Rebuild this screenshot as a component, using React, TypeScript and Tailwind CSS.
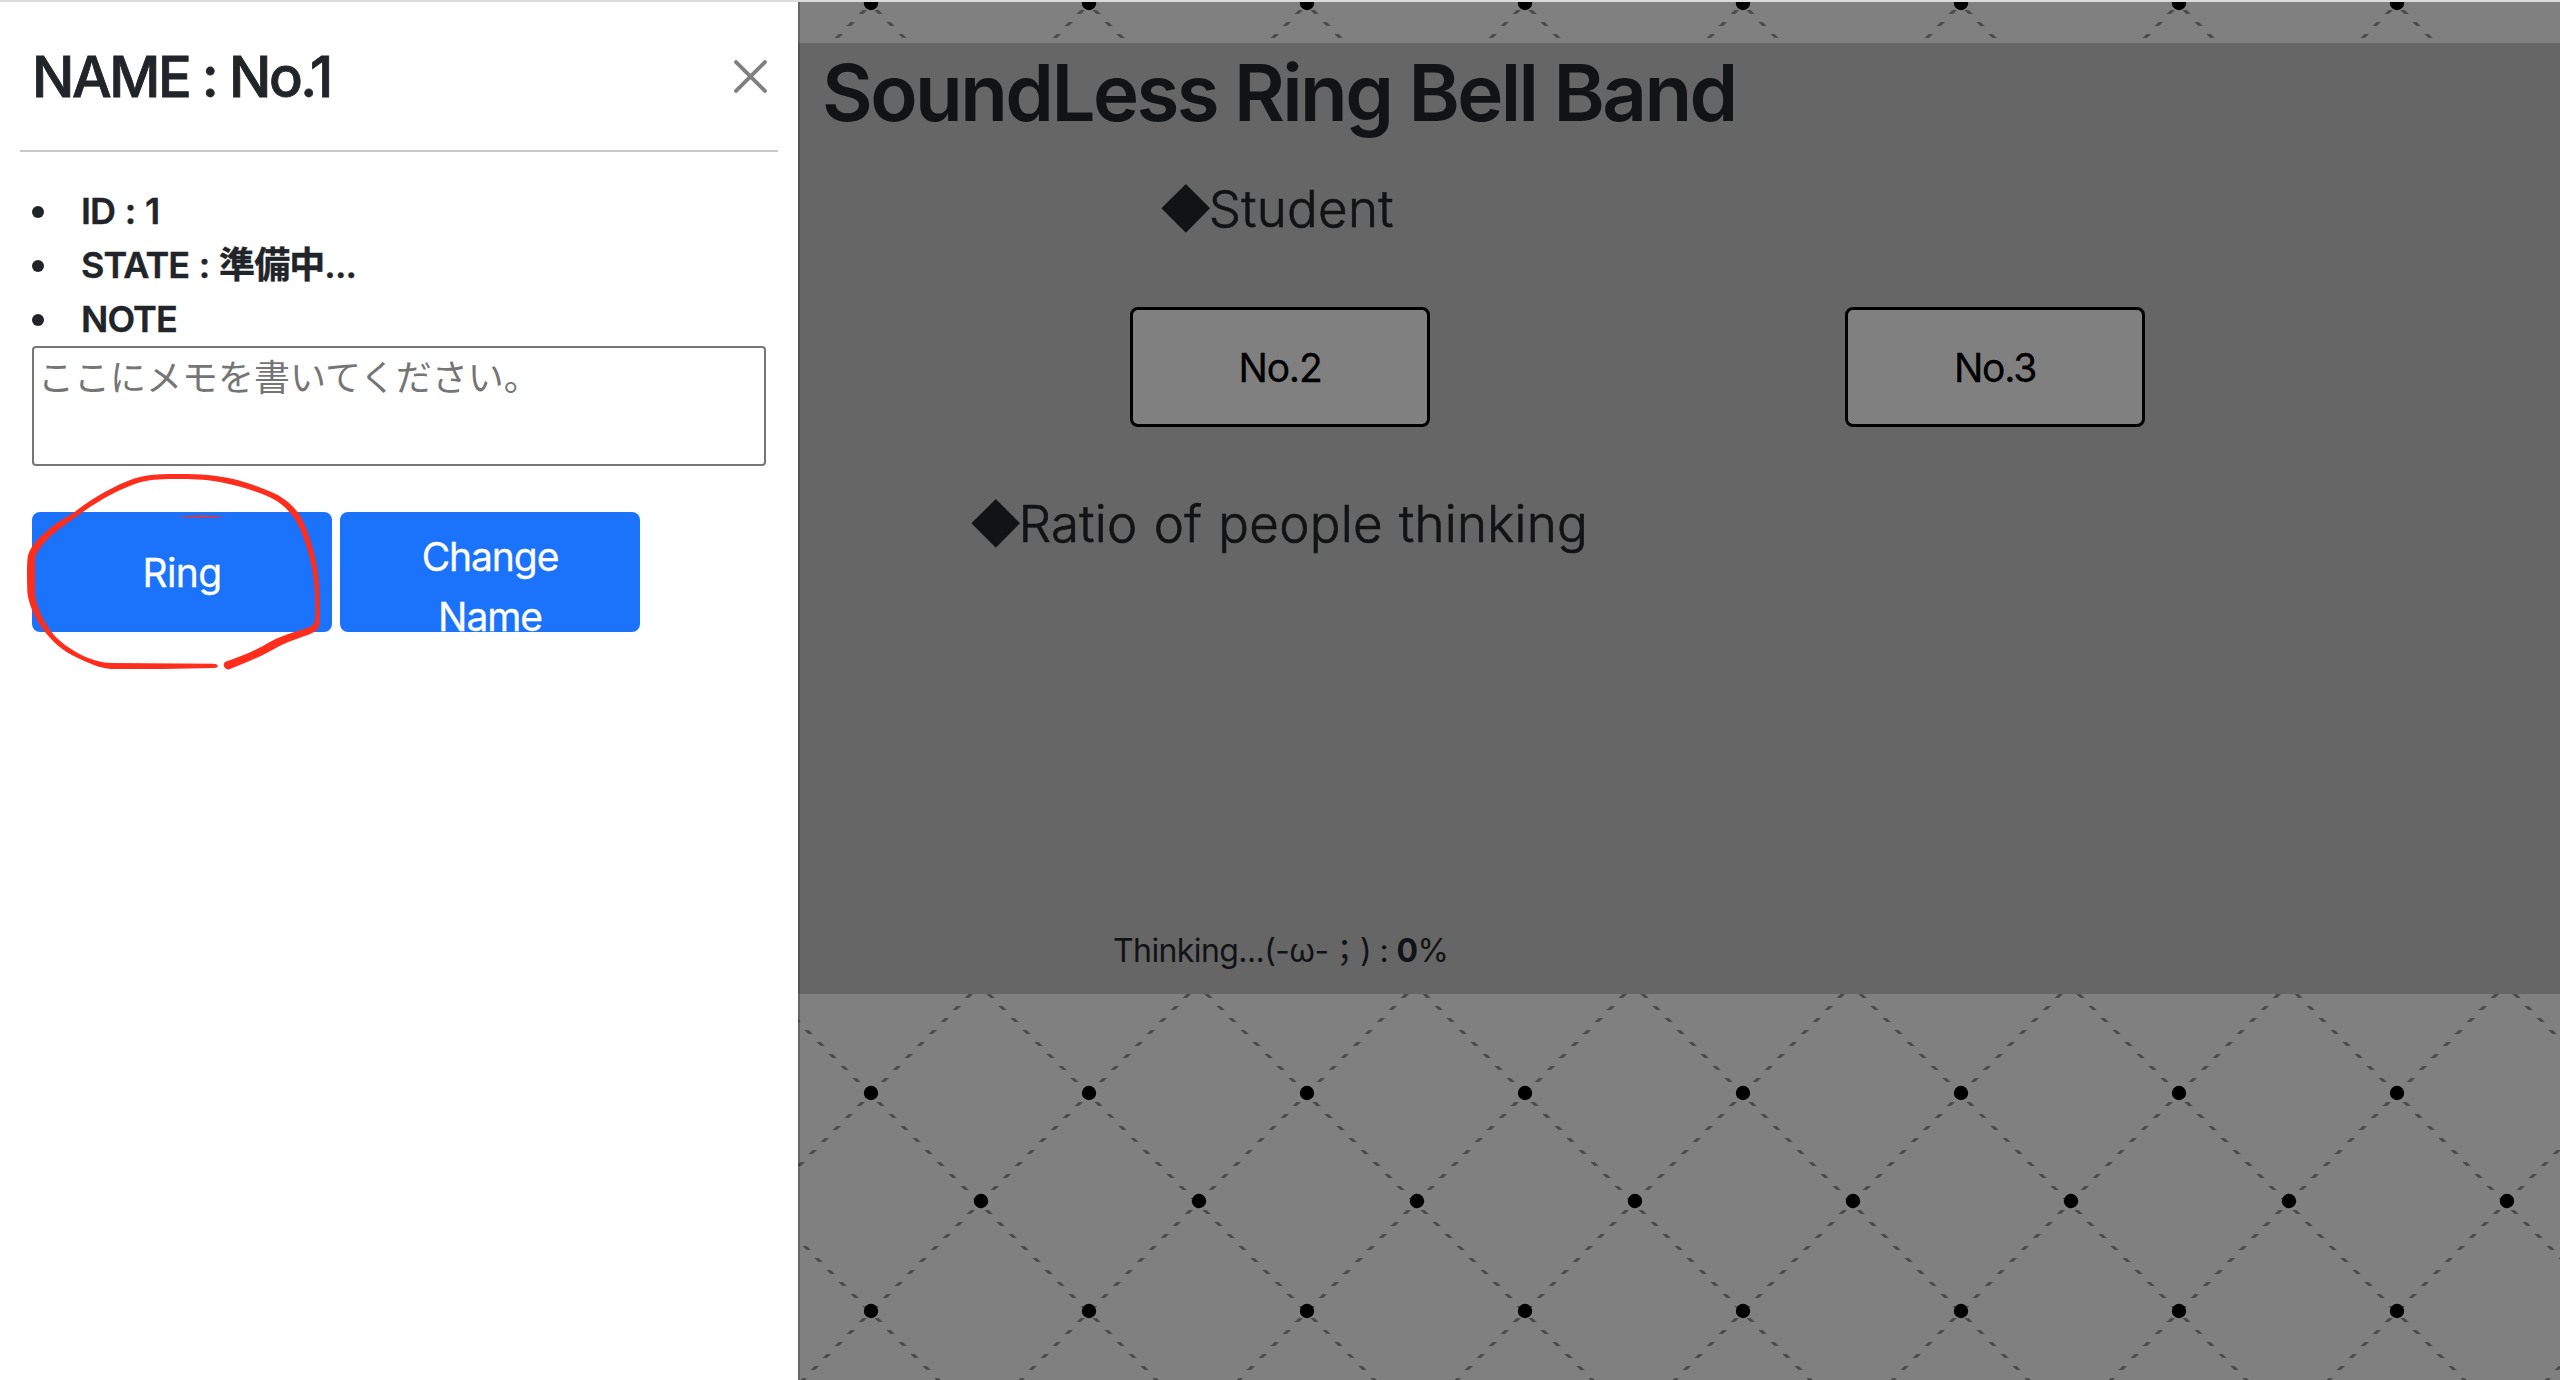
import React from "react";

const sans = "font-['Inter','Noto_Sans_CJK_JP',sans-serif]";

function Pattern() {
  return (
    <svg className="absolute inset-0 h-full w-full" aria-hidden="true">
      <defs>
        <pattern id="lines" width="218" height="218" patternUnits="userSpaceOnUse">
          <g stroke="#4c4c4c" strokeWidth="3.2">
            <path d="M-10 12.8L12.8 -10M-10 230.8L230.8 -10M200 238.8L238.8 200" />
            <path d="M-10 -4.6L230 235.4M-10 213.4L20 243.4M200 -12.6L230 17.4" />
          </g>
        </pattern>
        <pattern id="gaps" width="12" height="12" patternUnits="userSpaceOnUse">
          <rect y="2" width="12" height="8" fill="#808080" />
        </pattern>
        <pattern id="dots" x="762" y="-106" width="218" height="218" patternUnits="userSpaceOnUse">
          <circle cx="109" cy="109" r="7.2" />
          <circle cx="1" cy="-1" r="7.2" />
          <circle cx="219" cy="-1" r="7.2" />
          <circle cx="1" cy="217" r="7.2" />
          <circle cx="219" cy="217" r="7.2" />
        </pattern>
      </defs>
      <rect width="100%" height="100%" fill="#808080" />
      <rect width="100%" height="100%" fill="url(#lines)" />
      <rect width="100%" height="100%" fill="url(#gaps)" />
      <rect width="100%" height="100%" fill="url(#dots)" />
    </svg>
  );
}

function StudentButton({ name }: { name: string }) {
  return (
    <button className="h-[120px] w-[300px] rounded-[8px] border-[3px] border-black bg-[#808080] pt-[2px] text-[39px] tracking-[-1.2px] text-black [-webkit-text-stroke:0.3px_black]">
      {name}
    </button>
  );
}

function Item({ children }: { children: React.ReactNode }) {
  return (
    <li className="flex h-[54px] items-center">
      <span className="mt-[3px] mr-[37px] h-[12px] w-[12px] rounded-full bg-[#212529]" />
      <span className="mt-[2px]">{children}</span>
    </li>
  );
}

function Heading({ children }: { children: React.ReactNode }) {
  return (
    <h2 className="flex text-[51px] leading-[56px] font-light tracking-[0.3px]">
      <span className="-mr-[4px] -ml-px">◆</span>
      <span className="[word-spacing:1.5px] [-webkit-text-stroke:0.7px_#111315]">{children}</span>
    </h2>
  );
}

function RedCircle() {
  return (
    <svg
      className="pointer-events-none absolute top-[460px] left-[20px]"
      width="320"
      height="220"
      viewBox="0 0 960 660"
      fill="#ff2d1c"
      aria-hidden="true"
    >
      <path d="M165 155C220 112 285 76 345 55C385 42 435 42 480 42C540 42 590 46 640 57C690 70 740 88 775 106C815 130 840 160 852 190C872 235 888 295 894 340C899 390 900 440 899 490C896 508 886 516 872 521C845 532 805 544 780 557C725 588 680 608 628 628C612 630 606 612 616 605C665 589 710 570 755 543C795 522 840 512 870 500C882 494 886 485 886 470C888 430 884 370 877 330C868 280 850 225 832 190C815 160 795 138 765 120C725 98 660 78 610 68C570 60 530 57 480 57C430 56 390 58 355 68C290 90 225 128 175 166C130 198 95 222 70 252C55 270 45 285 45 302V405C50 440 68 480 92 512C115 545 155 570 195 590C220 600 245 608 275 609L580 611C598 612 598 624 580 624L430 627H275C235 625 205 608 175 595C125 572 95 545 65 502C40 465 24 425 22 395C21 360 20 320 23 290C32 255 60 230 90 205C115 183 140 172 165 155Z" />
      <path d="M472 170Q545 163 618 170Q545 174 472 170Z" />
    </svg>
  );
}

export default function App() {
  return (
    <div className={`${sans} relative flex h-[1380px] w-[2560px] overflow-hidden text-[#212529]`}>
      <Pattern />
      <aside className="relative w-[800px] shrink-0 border-r-2 border-black/20 bg-white bg-clip-padding pt-[2px]">
        <header className="flex h-[148px] items-center justify-between pr-[31px] pl-[32px]">
          <h5 className="pt-[2px] text-[56px] font-medium tracking-[-2.4px] [-webkit-text-stroke:0.8px_#212529]">NAME : No.1</h5>
          <svg width="33" height="33" viewBox="0 0 32 32" className="text-[#808080]">
            <path d="M2 2L30 30M30 2L2 30" stroke="currentColor" strokeWidth="3.8" strokeLinecap="round" />
          </svg>
        </header>
        <hr className="mx-5 h-[2px] border-0 bg-[#c8c8c8]" />
        <ul className="mt-[31px] mb-px ml-[32px] text-[36px] font-semibold tracking-[-0.9px] [word-spacing:1.5px] [-webkit-text-stroke:0.4px_#212529]">
          <Item>ID : 1</Item>
          <Item>STATE : 準備中...</Item>
          <Item>NOTE</Item>
        </ul>
        <textarea
          placeholder="ここにメモを書いてください。"
          className="mx-[32px] block h-[120px] w-[734px] resize-none rounded-[4px] border-2 border-[#767676] px-[4px] pt-[4px] text-[36px] leading-[53px] placeholder:text-[#757575]"
        />
        <div className="mt-[46px] ml-[32px] flex gap-2 text-[39px] text-white [-webkit-text-stroke:0.3px_white]">
          <button className="h-[120px] w-[300px] rounded-[8px] bg-[#1b73fb] pt-[3px] tracking-[-0.6px]">Ring</button>
          <button className="h-[120px] w-[300px] overflow-hidden rounded-[8px] bg-[#1b73fb] px-10 pt-[15px] leading-[60px] tracking-[-1.1px]">
            <span className="block h-[105px]">Change Name</span>
          </button>
        </div>
        <RedCircle />
      </aside>
      <main className="relative flex min-w-0 flex-1 flex-col">
        <section className="mt-[43px] -ml-[2px] flex h-[951px] flex-col border-l-2 border-[#525252] bg-[#666666] text-[#111315]">
          <h1 className="pt-[2px] pl-[22px] text-[78px] leading-[96px] font-semibold tracking-[-2.6px]">SoundLess Ring Bell Band</h1>
          <div className="mt-[40px] pl-[360px]">
            <Heading>Student</Heading>
          </div>
          <div className="mt-[70px] flex gap-[415px] pl-[330px]">
            <StudentButton name="No.2" />
            <StudentButton name="No.3" />
          </div>
          <div className="mt-[69px] mb-px pl-[170px]">
            <Heading>Ratio of people thinking</Heading>
          </div>
          <p className="mt-[374px] pl-[313px] text-[32px] leading-[48px] tracking-[-0.6px]">
            Thinking...(-ω-；) : <b className="font-bold">0</b>%
          </p>
        </section>
      </main>
      <div className="absolute inset-x-0 top-0 h-[2px] bg-[#dcdcdc]" />
    </div>
  );
}
